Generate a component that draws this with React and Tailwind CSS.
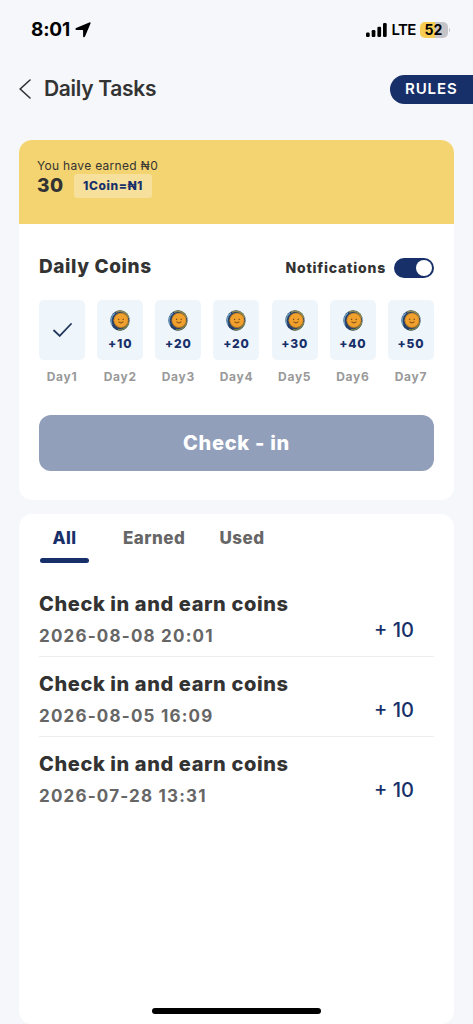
import React, { useState } from 'react'

const days = [
  { label: 'Day1', done: true },
  { label: 'Day2', coins: 10 },
  { label: 'Day3', coins: 20 },
  { label: 'Day4', coins: 20 },
  { label: 'Day5', coins: 30 },
  { label: 'Day6', coins: 40 },
  { label: 'Day7', coins: 50 },
]

const history = [
  { title: 'Check in and earn coins', date: '2026-08-08 20:01', amount: 10 },
  { title: 'Check in and earn coins', date: '2026-08-05 16:09', amount: 10 },
  { title: 'Check in and earn coins', date: '2026-07-28 13:31', amount: 10 },
]

function StatusBar() {
  return (
    <div className="flex h-[60px] items-center justify-between pl-[31px] pr-[23px] text-black">
      <div className="flex items-center gap-[5px]">
        <span className="text-[19px] font-bold leading-6 tracking-[-0.2px]">8:01</span>
        <svg className="h-4 w-4" viewBox="0 0 16 16" fill="currentColor">
          <path d="M14.3.4c.9-.4 1.6.3 1.2 1.2L10 14.600c-.5 1.100-1.900.9-1.900-.3V8.600c0-.4-.2-.6-.6-.6H1.500C.3 8 0 6.500 1.100 6z" />
        </svg>
      </div>
      <div className="flex items-center">
        <svg className="h-[14px] w-[21px]" viewBox="0 0 21 14" fill="currentColor">
          <rect x="0" y="9.500" width="3.700" height="4.500" rx="1.200" />
          <rect x="5.700" y="7" width="3.700" height="7" rx="1.200" />
          <rect x="11.400" y="3.800" width="3.700" height="10.200" rx="1.200" />
          <rect x="17" y="0" width="3.700" height="14" rx="1.200" />
        </svg>
        <span className="ml-[5px] w-[23px] text-[15px] font-semibold leading-5 tracking-[-0.6px]">LTE</span>
        <span className="ml-[5px] h-4 w-7 rounded-[5px] bg-linear-to-r from-[#f6cd52] from-52% to-[#c5c4c8] to-52% text-center text-[14px] font-bold leading-4">
          52
        </span>
        <span className="ml-px h-1 w-[1.500px] rounded-r-full bg-[#c5c4c8]" />
      </div>
    </div>
  )
}

function Coin() {
  return (
    <svg className="h-[21px] w-5" viewBox="0 0 20 21" fill="none">
      <ellipse cx="10" cy="10.500" rx="9.600" ry="10.300" fill="#25406a" />
      <path d="M2 15A9 9.600 0 0 1 5 3" stroke="#6f9fc0" strokeWidth="1.300" />
      <path d="M6 2.200A9 9.300 0 0 1 18.600 8" stroke="#8b8a55" strokeWidth="1.600" />
      <path d="M18.700 12A9 9.300 0 0 1 8 19.600" stroke="#79804f" strokeWidth="1.600" />
      <circle cx="11" cy="10.300" r="7.600" fill="#b87a26" />
      <circle cx="11" cy="10.300" r="6.700" fill="#f0a02c" />
      <path d="M8.600 8.700v1.400M13.200 8.700v1.400" stroke="#7a4a17" strokeWidth="1.200" />
      <path d="M8.500 11.700q2.400 2.300 4.900 0" stroke="#8a551b" strokeWidth="1.100" />
    </svg>
  )
}

function DayCard({ day }) {
  return (
    <div className="flex w-[46px] flex-col items-center">
      <div className="flex h-[60px] w-full flex-col items-center rounded-[5px] bg-[#eff6fb]">
        {day.done ? (
          <svg className="mt-[23px] h-[14px] w-[19px]" viewBox="0 0 19 14" fill="none">
            <path d="M1 7.500l5.700 5.400L18 1" stroke="#22375c" strokeWidth="1.800" strokeLinecap="round" />
          </svg>
        ) : (
          <>
            <div className="mt-[10px] h-[21px]">
              <Coin />
            </div>
            <span className="mt-[5px] text-[12px] font-extrabold leading-4 tracking-[0.8px] text-[#18306a]">
              +{day.coins}
            </span>
          </>
        )}
      </div>
      <span className="mt-2 text-[12px] font-bold leading-[18px] tracking-[0.7px] text-[#999999]">{day.label}</span>
    </div>
  )
}

export default function App() {
  const [tab, setTab] = useState('All')
  const [notify, setNotify] = useState(true)

  return (
    <div className="relative flex h-[1024px] w-full flex-col overflow-hidden bg-[#f6f7fa] font-['Inter',sans-serif] text-[#333333]">
      <StatusBar />

      <header className="flex h-[58px] items-center pl-[19px]">
        <svg className="h-5 w-3" viewBox="0 0 12 20" fill="none">
          <path d="M11 1L1.200 10 11 19" stroke="#333333" strokeWidth="1.600" strokeLinecap="round" />
        </svg>
        <h1 className="ml-[13px] text-[21px] font-semibold leading-7 tracking-[-0.3px]">Daily Tasks</h1>
        <button className="ml-auto h-[29px] w-[83px] rounded-l-full bg-[#18306a] pl-[15px] text-left text-[15px] font-semibold tracking-[0.9px] text-white">
          RULES
        </button>
      </header>

      <section className="mx-[19px] mt-[22px] h-[360px] shrink-0 overflow-hidden rounded-[13px] bg-white">
        <div className="h-[84px] bg-[#f3d470] pl-[18px] pt-[18px]">
          <p className="text-[12px] leading-4 tracking-[0.3px]">You have earned ₦0</p>
          <div className="flex items-center">
            <span className="w-[37px] text-[19px] font-extrabold leading-6 tracking-[0.6px]">30</span>
            <span className="flex h-6 w-[78px] items-center justify-center rounded-[3px] bg-[#f7e09b] text-[12px] font-extrabold tracking-[0.6px] text-[#18306a]">
              1Coin=₦1
            </span>
          </div>
        </div>

        <div className="px-5">
          <div className="flex h-[76px] items-center pt-[11px]">
            <h2 className="text-[19px] font-extrabold tracking-[0.6px]">Daily Coins</h2>
            <span className="ml-auto text-[14px] font-extrabold tracking-[0.8px]">Notifications</span>
            <button
              onClick={() => setNotify(!notify)}
              className={`ml-2 flex h-5 w-10 items-center rounded-full px-[2px] ${notify ? 'justify-end bg-[#18306a]' : 'justify-start bg-gray-300'}`}
            >
              <span className="h-4 w-4 rounded-full bg-white" />
            </button>
          </div>

          <div className="flex justify-between">
            {days.map((day) => (
              <DayCard key={day.label} day={day} />
            ))}
          </div>

          <button className="mt-[29px] h-14 w-full rounded-xl bg-[#929fbb] text-[20px] font-extrabold tracking-[0.7px] text-white">
            Check - in
          </button>
        </div>
      </section>

      <section className="mx-[19px] mt-[14px] h-[510px] shrink-0 rounded-[13px] bg-white px-5">
        <nav className="flex h-[50px] pl-px">
          {['All', 'Earned', 'Used'].map((name) => (
            <button
              key={name}
              onClick={() => setTab(name)}
              className={`mr-[34px] flex flex-col items-center text-[17px] font-extrabold leading-6 tracking-[0.5px] first:w-[49px] ${tab === name ? 'text-[#18306a]' : 'text-[#666666]'}`}
            >
              <span className="mt-3">{name}</span>
              {tab === name && <span className="mt-2 h-[5px] w-[49px] rounded-full bg-[#18306a]" />}
            </button>
          ))}
        </nav>

        <ul className="pt-[13px]">
          {history.map((item) => (
            <li
              key={item.date}
              className="flex h-20 items-center justify-between border-b border-[#eeeeee] last:border-0"
            >
              <div>
                <p className="mt-1 text-[20px] font-extrabold leading-7 tracking-[0.6px]">{item.title}</p>
                <p className="mt-[6px] text-[17px] font-bold leading-6 tracking-[1.200px] text-[#666666]">{item.date}</p>
              </div>
              <span className="mr-5 mt-[26px] text-[20px] font-medium leading-6 text-[#18306a]">+ {item.amount}</span>
            </li>
          ))}
        </ul>
      </section>

      {/* home indicator */}
      <div className="absolute bottom-[10px] left-[152px] h-[6px] w-[169px] rounded-full bg-black" />
    </div>
  )
}
